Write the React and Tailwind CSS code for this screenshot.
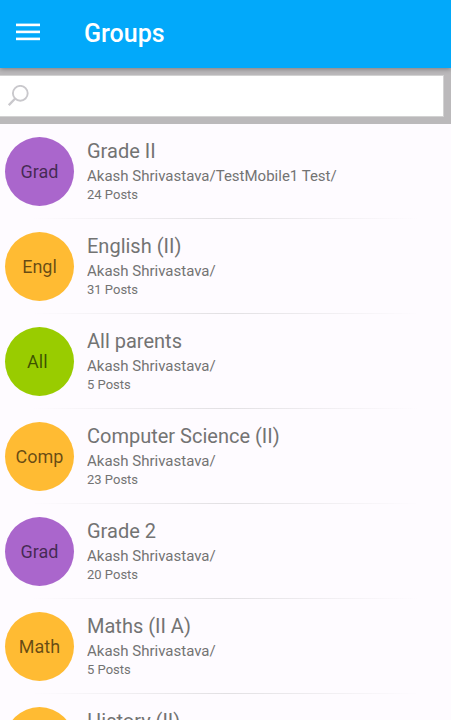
import React from "react";

const groups = [
  { id: 1, name: "Grade II", short: "Grad", members: "Akash Shrivastava/TestMobile1 Test/", posts: 24, color: "bg-[#aa66cc]" },
  { id: 2, name: "English (II)", short: "Engl", members: "Akash Shrivastava/", posts: 31, color: "bg-[#ffbb33]" },
  { id: 3, name: "All parents", short: "All ", members: "Akash Shrivastava/", posts: 5, color: "bg-[#99cc00]" },
  { id: 4, name: "Computer Science (II)", short: "Comp", members: "Akash Shrivastava/", posts: 23, color: "bg-[#ffbb33]" },
  { id: 5, name: "Grade 2", short: "Grad", members: "Akash Shrivastava/", posts: 20, color: "bg-[#aa66cc]" },
  { id: 6, name: "Maths (II A)", short: "Math", members: "Akash Shrivastava/", posts: 5, color: "bg-[#ffbb33]" },
  { id: 7, name: "History (II)", short: "Hist", members: "Akash Shrivastava/", posts: 8, color: "bg-[#ffbb33]" },
];

const Header = () => (
  <header className="z-10 flex h-17 shrink-0 items-center bg-[#02a9fa] px-4 text-white shadow-[0_1px_5px_rgba(0,0,0,0.35)]">
    <button type="button" aria-label="Menu" className="-mt-1">
      <svg width="24" height="18" viewBox="0 0 24 18" fill="currentColor">
        <rect y="0.6" width="24" height="2.6" />
        <rect y="7.6" width="24" height="2.6" />
        <rect y="14.6" width="24" height="2.6" />
      </svg>
    </button>
    <h1 className="ml-11 text-[25px] leading-8 font-medium">Groups</h1>
  </header>
);

const SearchBar = () => (
  <div className="shrink-0 bg-[#bbb9bb] py-[7px] pr-[7px]">
    <label className="flex h-[42px] items-center border border-l-0 border-[#d2d2d2] bg-white pl-2">
      <svg width="22" height="22" viewBox="0 0 22 22" fill="none" stroke="#c9c8cc">
        <circle cx="12.3" cy="8.3" r="7.4" strokeWidth="1.9" />
        <path d="M7 13.7L0.8 20.2" strokeWidth="2.3" />
      </svg>
      <input
        type="search"
        aria-label="Search groups"
        className="ml-2 h-full min-w-0 flex-1 text-base text-[#6f6f6f] outline-none"
      />
    </label>
  </div>
);

const GroupRow = ({ group }) => (
  <li>
    <div className="flex h-[94px] items-start pt-[13px] pl-[5px]">
      <div
        className={`flex size-[69px] shrink-0 items-center justify-center rounded-full text-lg whitespace-pre text-black/60 ${group.color}`}
      >
        {group.short}
      </div>
      <div className="ml-[13px] min-w-0 pt-px text-[#737373]">
        <h2 className="mb-0.5 truncate text-xl leading-[26px]">{group.name}</h2>
        <p className="truncate text-[15px] leading-5">{group.members}</p>
        <p className="text-[13px] leading-[18px]">{group.posts} Posts</p>
      </div>
    </div>
    <div className="mx-8 h-px bg-linear-to-r from-transparent via-[#e2e0e3] to-transparent" />
  </li>
);

const App = () => {
  return (
    <div className="flex h-screen flex-col bg-[#fefbff] font-[Roboto,sans-serif]">
      <Header />
      <SearchBar />
      <ul className="min-h-0 flex-1 overflow-y-auto [scrollbar-width:none]">
        {groups.map((group) => (
          <GroupRow key={group.id} group={group} />
        ))}
      </ul>
    </div>
  );
};

export default App;
